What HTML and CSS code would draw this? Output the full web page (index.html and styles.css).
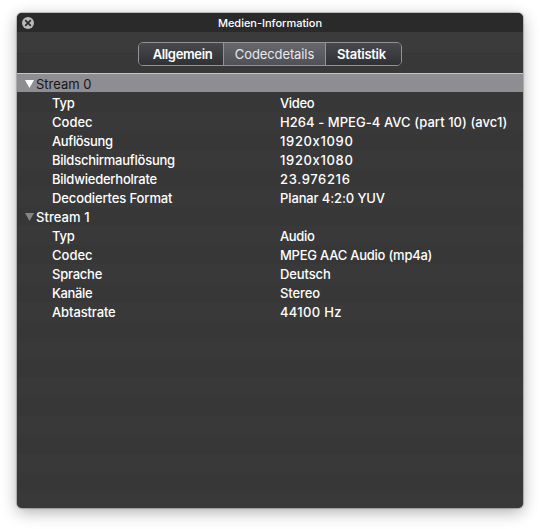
FILE: index.html
```
<!DOCTYPE html>
<html lang="de">
<head>
<meta charset="utf-8">
<title>Medien-Information</title>
<link rel="stylesheet" href="styles.css">
</head>
<body>
<main class="window">
  <header class="titlebar">
    <svg class="close" viewBox="0 0 12 12"><circle cx="6" cy="6" r="6" fill="#b9b9b9"/><path d="M3.2 3.2l5.6 5.6M8.8 3.2l-5.6 5.6" stroke="#2a2a2a" stroke-width="1.7"/></svg>
    <h1 class="title">Medien-Information</h1>
  </header>
  <nav class="toolbar">
    <div class="tabs">
      <button class="tab general">Allgemein</button>
      <button class="tab active">Codecdetails</button>
      <button class="tab stats">Statistik</button>
    </div>
  </nav>
  <section class="list">
    <div class="row group selected"><svg class="arrow" viewBox="0 0 9 8"><path d="M0 0h9L4.5 8z"/></svg><span>Stream 0</span></div>
    <div class="row"><span class="tight">Typ</span><span class="tighter">Video</span></div>
    <div class="row"><span>Codec</span><span class="wide">H264 - MPEG-4 AVC (part 10) (avc1)</span></div>
    <div class="row"><span class="tighter">Auflösung</span><span class="digits">1920x1090</span></div>
    <div class="row"><span class="tight">Bildschirmauflösung</span><span class="digits">1920x1080</span></div>
    <div class="row"><span class="tight">Bildwiederholrate</span><span class="digits">23.976216</span></div>
    <div class="row"><span class="snug">Decodiertes Format</span><span class="snug">Planar 4:2:0 YUV</span></div>
    <div class="row group"><svg class="arrow" viewBox="0 0 9 8"><path d="M0 0h9L4.5 8z"/></svg><span class="wide">Stream 1</span></div>
    <div class="row"><span class="tight">Typ</span><span class="tighter">Audio</span></div>
    <div class="row"><span>Codec</span><span class="tight">MPEG AAC Audio (mp4a)</span></div>
    <div class="row"><span class="tight">Sprache</span><span class="snug">Deutsch</span></div>
    <div class="row"><span class="tighter">Kanäle</span><span class="snug">Stereo</span></div>
    <div class="row"><span class="snug">Abtastrate</span><span class="rate">44100 Hz</span></div>
  </section>
</main>
</body>
</html>
```
FILE: styles.css
```
* { box-sizing: border-box; }
body {
  margin: 0;
  padding: 13px 17px 21px;
  height: 529px;
  overflow: hidden;
  background: #fff;
  font-family: Inter, "Liberation Sans", sans-serif;
  font-feature-settings: "calt" 0;
  color: #fff;
}
.window {
  height: 495px;
  display: flex;
  flex-direction: column;
  overflow: hidden;
  border-radius: 5px;
  background: #383838;
  box-shadow: 0 0 1px 1px rgba(0, 0, 0, .22), 0 4px 16px rgba(0, 0, 0, .32);
}
.titlebar {
  flex: none;
  height: 19px;
  display: grid;
  grid-template-columns: 17px 1fr 17px;
  align-items: center;
  padding-left: 5px;
  padding-right: 5px;
  background: #2a2a2a;
}
.close { width: 12px; height: 12px; }
.title {
  margin: 0;
  text-align: center;
  font-size: 11px;
  font-weight: 450;
  line-height: 19px;
  letter-spacing: -.02px;
  padding-top: 1px;
}
.toolbar {
  flex: none;
  height: 41px;
  padding-top: 10px;
  display: flex;
  justify-content: center;
  background: linear-gradient(#3b3b3b 21px, #353535 21px, #353535 22px, #383838 22px);
}
.tabs {
  width: 264px;
  height: 24px;
  display: grid;
  grid-template-columns: 84px 103px 1fr;
  border: 1px solid #929297;
  border-radius: 5px;
  overflow: hidden;
}
.tab {
  margin: 0;
  padding: 0;
  border: 0;
  background: linear-gradient(#48494d, #303135);
  font-family: inherit;
  font-feature-settings: inherit;
  font-size: 13px;
  font-weight: 600;
  line-height: 22px;
  letter-spacing: -.35px;
  color: #fff;
}
.tab.general { padding-left: 3px; }
.tab.stats { padding-right: 4px; letter-spacing: -.25px; }
.tab.active {
  border: solid #929297;
  border-width: 0 1px;
  background: linear-gradient(#67686d, #505156);
  font-weight: 400;
  letter-spacing: -.1px;
  color: #e9e9eb;
}
.list {
  flex: 1;
  border-top: 1px solid #c5c5c8;
  background: repeating-linear-gradient(#393939 0 19px, #373737 19px 38px);
}
.row {
  height: 19px;
  display: grid;
  grid-template-columns: 228px 1fr;
  padding-left: 35px;
  font-size: 13px;
  font-weight: 500;
  line-height: 23px;
  white-space: nowrap;
}
.row.group {
  grid-template-columns: 9px 1fr;
  column-gap: 2px;
  padding-left: 8px;
}
.row.selected {
  height: 18px;
  line-height: 21px;
  background: #8d8d92;
  color: #171717;
  font-weight: 400;
}
.row:nth-child(2) { margin-top: 0; }
.wide { letter-spacing: .06px; }
.snug { letter-spacing: -.12px; }
.tight { letter-spacing: -.24px; }
.tighter { letter-spacing: -.35px; }
.digits { letter-spacing: .65px; }
.rate { letter-spacing: .3px; }
.arrow { width: 9px; height: 8px; margin-top: 7px; fill: #858585; }
.selected .arrow { margin-top: 6px; fill: #fff; }
```
